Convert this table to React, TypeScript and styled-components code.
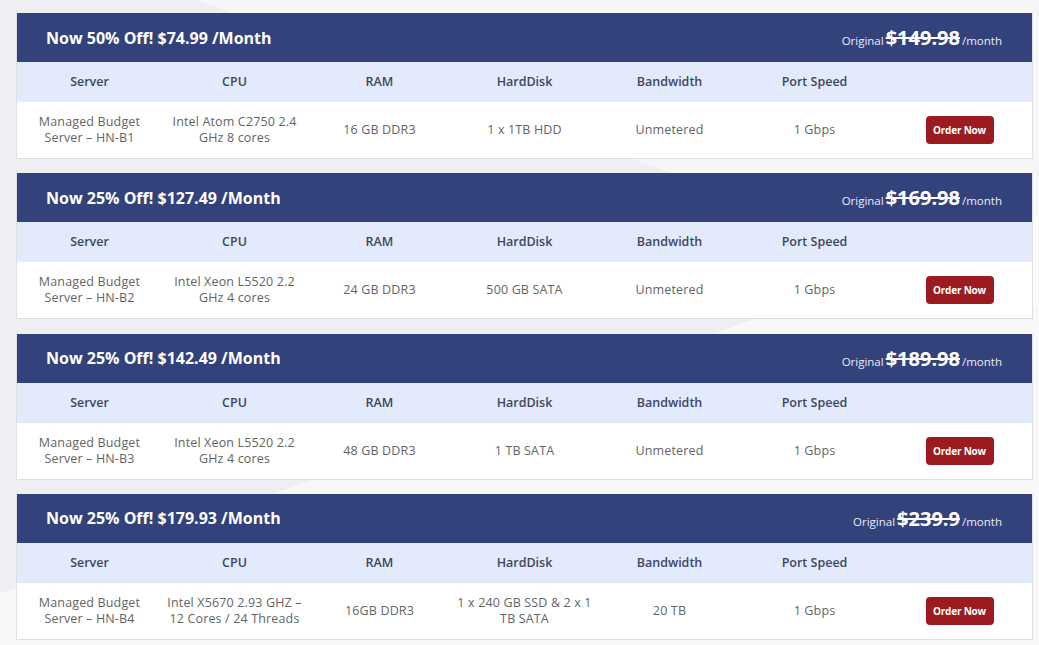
import styled, { createGlobalStyle } from "styled-components";

const GlobalStyle = createGlobalStyle`
  html, body {
    margin: 0;
    padding: 0;
  }
  body {
    width: 1039px;
    min-height: 645px;
    overflow: hidden;
    font-family: "Open Sans", "Liberation Sans", sans-serif;
    background:
      linear-gradient(160deg, transparent 0 58%, rgba(255, 255, 255, 0.55) 58% 100%),
      linear-gradient(200deg, #f6f6f8 0 30%, #efeff3 30% 100%);
  }
`;

const Page = styled.div`
  display: flex;
  flex-direction: column;
  gap: 14.33px;
  width: 1017px;
  padding: 13px 0 0 16px;
`;

const Card = styled.section`
  background: #fff;
  border: 1px solid #e0e0e4;
  border-top: none;
  box-sizing: border-box;
`;

const Header = styled.header`
  height: 49px;
  display: flex;
  align-items: center;
  justify-content: space-between;
  padding: 0 30px 0 29px;
  background: #33427b;
  color: #fff;
`;

const Title = styled.h2`
  margin: 0;
  font-size: 16px;
  font-weight: 700;
`;

const Original = styled.div`
  display: flex;
  align-items: baseline;
  gap: 2px;
  font-size: 11.5px;
  color: #e8ebf5;
`;

const OldPrice = styled.span`
  font-size: 20px;
  font-weight: 700;
  color: #fff;
  text-decoration: line-through;
  text-decoration-thickness: 2px;
`;

const Row = styled.div<{ $head?: boolean }>`
  display: grid;
  grid-template-columns: repeat(7, 1fr);
  align-items: center;
  height: ${(p) => (p.$head ? "40px" : "56px")};
  background: ${(p) => (p.$head ? "#e3eafc" : "#fff")};
  color: ${(p) => (p.$head ? "#3c4862" : "#646464")};
  font-size: 12.5px;
  font-weight: ${(p) => (p.$head ? 600 : 400)};
  letter-spacing: ${(p) => (p.$head ? "0" : "0.15px")};
  line-height: 16px;
`;

const Cell = styled.div`
  text-align: center;
  padding: 0 2px;
`;

const OrderButton = styled.button`
  justify-self: center;
  width: 68px;
  height: 28px;
  border: none;
  border-radius: 4px;
  background: #9b1b20;
  color: #fff;
  font-family: "Open Sans", "Liberation Sans", sans-serif;
  font-size: 10px;
  font-weight: 700;
  letter-spacing: -0.2px;
  cursor: pointer;
`;

const columns = ["Server", "CPU", "RAM", "HardDisk", "Bandwidth", "Port Speed"];

const plans = [
  {
    deal: "Now 50% Off! $74.99 /Month",
    original: "$149.98",
    specs: ["Managed Budget Server – HN-B1", "Intel Atom C2750 2.4 GHz 8 cores", "16 GB DDR3", "1 x 1TB HDD", "Unmetered", "1 Gbps"],
  },
  {
    deal: "Now 25% Off! $127.49 /Month",
    original: "$169.98",
    specs: ["Managed Budget Server – HN-B2", "Intel Xeon L5520 2.2 GHz 4 cores", "24 GB DDR3", "500 GB SATA", "Unmetered", "1 Gbps"],
  },
  {
    deal: "Now 25% Off! $142.49 /Month",
    original: "$189.98",
    specs: ["Managed Budget Server – HN-B3", "Intel Xeon L5520 2.2 GHz 4 cores", "48 GB DDR3", "1 TB SATA", "Unmetered", "1 Gbps"],
  },
  {
    deal: "Now 25% Off! $179.93 /Month",
    original: "$239.9",
    specs: ["Managed Budget Server – HN-B4", "Intel X5670 2.93 GHZ – 12 Cores / 24 Threads", "16GB DDR3", "1 x 240 GB SSD & 2 x 1 TB SATA", "20 TB", "1 Gbps"],
  },
];

export default function App() {
  return (
    <>
      <GlobalStyle />
      <Page>
        {plans.map((plan) => (
          <Card key={plan.deal}>
            <Header>
              <Title>{plan.deal}</Title>
              <Original>
                Original <OldPrice>{plan.original}</OldPrice> /month
              </Original>
            </Header>
            <Row $head>
              {columns.map((c) => (
                <Cell key={c}>{c}</Cell>
              ))}
              <Cell />
            </Row>
            <Row>
              {plan.specs.map((s, i) => (
                <Cell key={i}>{s}</Cell>
              ))}
              <OrderButton>Order Now</OrderButton>
            </Row>
          </Card>
        ))}
      </Page>
    </>
  );
}
